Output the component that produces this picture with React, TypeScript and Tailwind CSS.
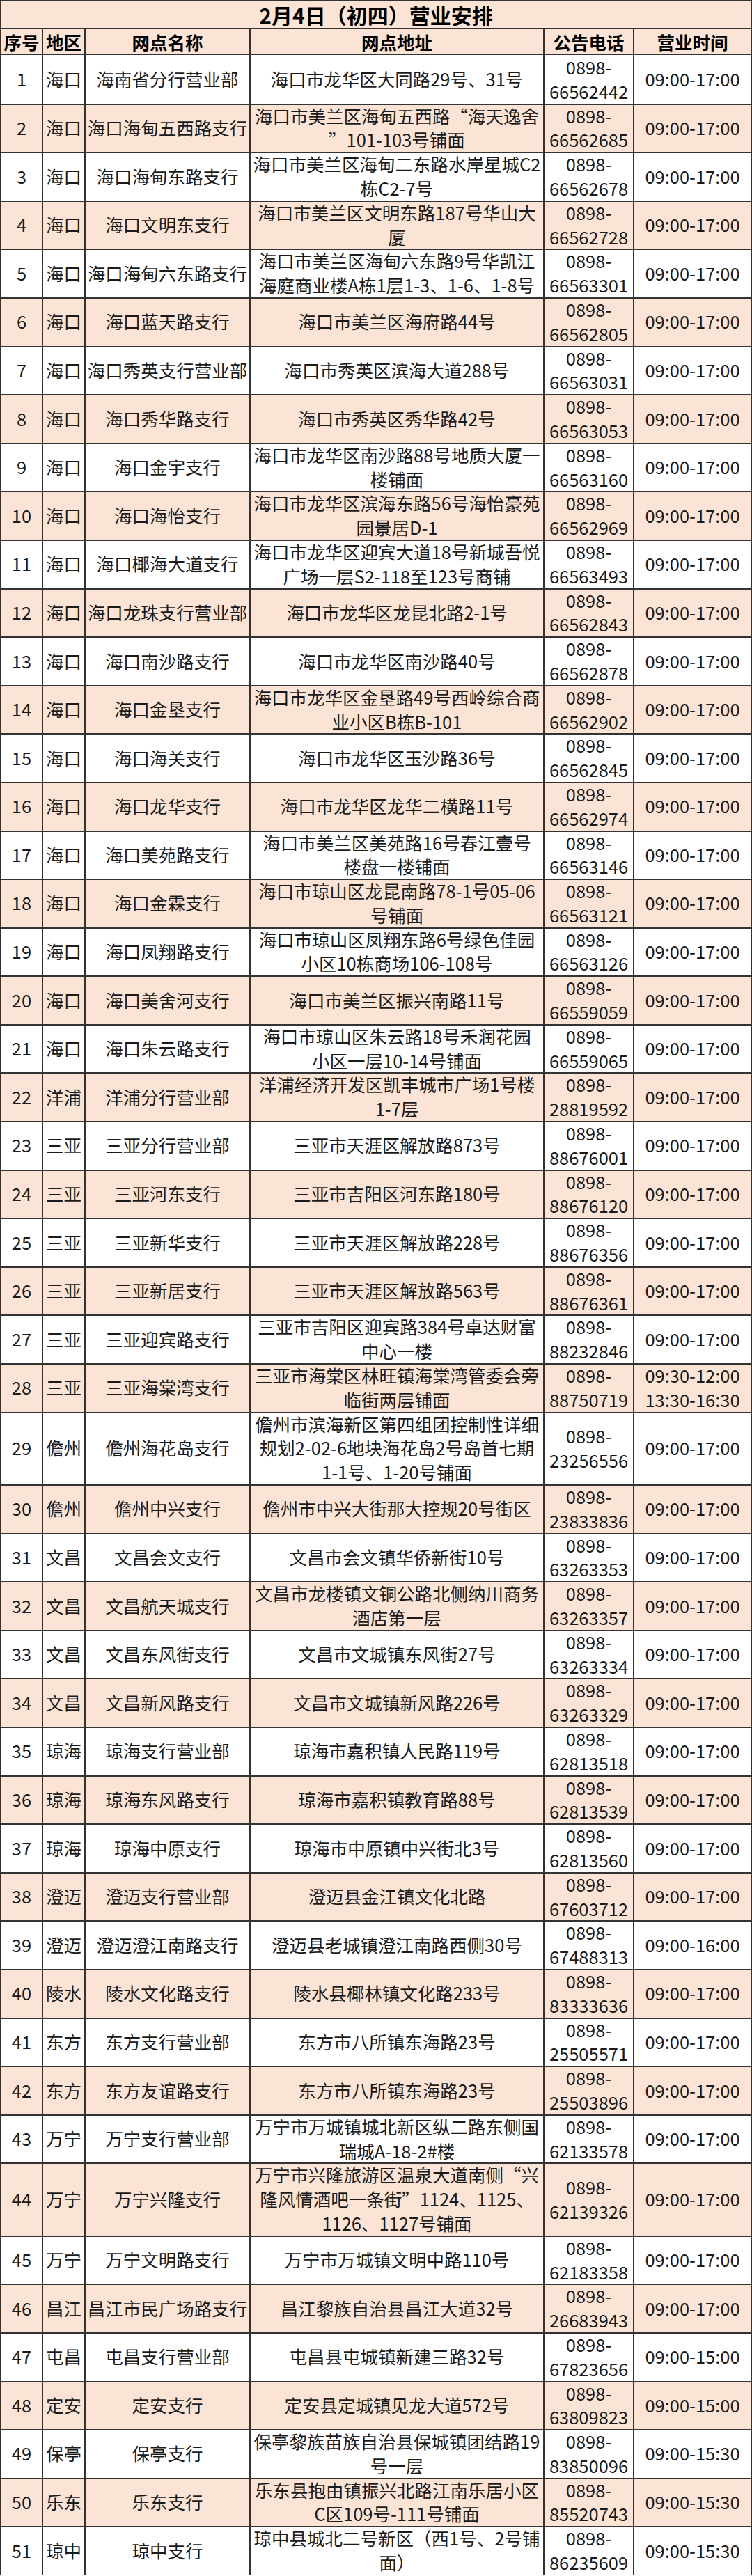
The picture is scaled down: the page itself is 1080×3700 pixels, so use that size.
type Branch = { no: number; area: string; name: string; addr: string; tel: string; hours?: string };

// addr lines are split on "|" so the wrapping matches the printed sheet
const rows: Branch[] = [
  { no: 1, area: "海口", name: "海南省分行营业部", addr: "海口市龙华区大同路29号、31号", tel: "66562442" },
  { no: 2, area: "海口", name: "海口海甸五西路支行", addr: "海口市美兰区海甸五西路“海天逸舍|”101-103号铺面", tel: "66562685" },
  { no: 3, area: "海口", name: "海口海甸东路支行", addr: "海口市美兰区海甸二东路水岸星城C2|栋C2-7号", tel: "66562678" },
  { no: 4, area: "海口", name: "海口文明东支行", addr: "海口市美兰区文明东路187号华山大|厦", tel: "66562728" },
  { no: 5, area: "海口", name: "海口海甸六东路支行", addr: "海口市美兰区海甸六东路9号华凯江|海庭商业楼A栋1层1-3、1-6、1-8号", tel: "66563301" },
  { no: 6, area: "海口", name: "海口蓝天路支行", addr: "海口市美兰区海府路44号", tel: "66562805" },
  { no: 7, area: "海口", name: "海口秀英支行营业部", addr: "海口市秀英区滨海大道288号", tel: "66563031" },
  { no: 8, area: "海口", name: "海口秀华路支行", addr: "海口市秀英区秀华路42号", tel: "66563053" },
  { no: 9, area: "海口", name: "海口金宇支行", addr: "海口市龙华区南沙路88号地质大厦一|楼铺面", tel: "66563160" },
  { no: 10, area: "海口", name: "海口海怡支行", addr: "海口市龙华区滨海东路56号海怡豪苑|园景居D-1", tel: "66562969" },
  { no: 11, area: "海口", name: "海口椰海大道支行", addr: "海口市龙华区迎宾大道18号新城吾悦|广场一层S2-118至123号商铺", tel: "66563493" },
  { no: 12, area: "海口", name: "海口龙珠支行营业部", addr: "海口市龙华区龙昆北路2-1号", tel: "66562843" },
  { no: 13, area: "海口", name: "海口南沙路支行", addr: "海口市龙华区南沙路40号", tel: "66562878" },
  { no: 14, area: "海口", name: "海口金垦支行", addr: "海口市龙华区金垦路49号西岭综合商|业小区B栋B-101", tel: "66562902" },
  { no: 15, area: "海口", name: "海口海关支行", addr: "海口市龙华区玉沙路36号", tel: "66562845" },
  { no: 16, area: "海口", name: "海口龙华支行", addr: "海口市龙华区龙华二横路11号", tel: "66562974" },
  { no: 17, area: "海口", name: "海口美苑路支行", addr: "海口市美兰区美苑路16号春江壹号|楼盘一楼铺面", tel: "66563146" },
  { no: 18, area: "海口", name: "海口金霖支行", addr: "海口市琼山区龙昆南路78-1号05-06|号铺面", tel: "66563121" },
  { no: 19, area: "海口", name: "海口凤翔路支行", addr: "海口市琼山区凤翔东路6号绿色佳园|小区10栋商场106-108号", tel: "66563126" },
  { no: 20, area: "海口", name: "海口美舍河支行", addr: "海口市美兰区振兴南路11号", tel: "66559059" },
  { no: 21, area: "海口", name: "海口朱云路支行", addr: "海口市琼山区朱云路18号禾润花园|小区一层10-14号铺面", tel: "66559065" },
  { no: 22, area: "洋浦", name: "洋浦分行营业部", addr: "洋浦经济开发区凯丰城市广场1号楼|1-7层", tel: "28819592" },
  { no: 23, area: "三亚", name: "三亚分行营业部", addr: "三亚市天涯区解放路873号", tel: "88676001" },
  { no: 24, area: "三亚", name: "三亚河东支行", addr: "三亚市吉阳区河东路180号", tel: "88676120" },
  { no: 25, area: "三亚", name: "三亚新华支行", addr: "三亚市天涯区解放路228号", tel: "88676356" },
  { no: 26, area: "三亚", name: "三亚新居支行", addr: "三亚市天涯区解放路563号", tel: "88676361" },
  { no: 27, area: "三亚", name: "三亚迎宾路支行", addr: "三亚市吉阳区迎宾路384号卓达财富|中心一楼", tel: "88232846" },
  { no: 28, area: "三亚", name: "三亚海棠湾支行", addr: "三亚市海棠区林旺镇海棠湾管委会旁|临街两层铺面", tel: "88750719", hours: "09:30-12:00|13:30-16:30" },
  { no: 29, area: "儋州", name: "儋州海花岛支行", addr: "儋州市滨海新区第四组团控制性详细|规划2-02-6地块海花岛2号岛首七期|1-1号、1-20号铺面", tel: "23256556" },
  { no: 30, area: "儋州", name: "儋州中兴支行", addr: "儋州市中兴大街那大控规20号街区", tel: "23833836" },
  { no: 31, area: "文昌", name: "文昌会文支行", addr: "文昌市会文镇华侨新街10号", tel: "63263353" },
  { no: 32, area: "文昌", name: "文昌航天城支行", addr: "文昌市龙楼镇文铜公路北侧纳川商务|酒店第一层", tel: "63263357" },
  { no: 33, area: "文昌", name: "文昌东风街支行", addr: "文昌市文城镇东风街27号", tel: "63263334" },
  { no: 34, area: "文昌", name: "文昌新风路支行", addr: "文昌市文城镇新风路226号", tel: "63263329" },
  { no: 35, area: "琼海", name: "琼海支行营业部", addr: "琼海市嘉积镇人民路119号", tel: "62813518" },
  { no: 36, area: "琼海", name: "琼海东风路支行", addr: "琼海市嘉积镇教育路88号", tel: "62813539" },
  { no: 37, area: "琼海", name: "琼海中原支行", addr: "琼海市中原镇中兴街北3号", tel: "62813560" },
  { no: 38, area: "澄迈", name: "澄迈支行营业部", addr: "澄迈县金江镇文化北路", tel: "67603712" },
  { no: 39, area: "澄迈", name: "澄迈澄江南路支行", addr: "澄迈县老城镇澄江南路西侧30号", tel: "67488313", hours: "09:00-16:00" },
  { no: 40, area: "陵水", name: "陵水文化路支行", addr: "陵水县椰林镇文化路233号", tel: "83333636" },
  { no: 41, area: "东方", name: "东方支行营业部", addr: "东方市八所镇东海路23号", tel: "25505571" },
  { no: 42, area: "东方", name: "东方友谊路支行", addr: "东方市八所镇东海路23号", tel: "25503896" },
  { no: 43, area: "万宁", name: "万宁支行营业部", addr: "万宁市万城镇城北新区纵二路东侧国|瑞城A-18-2#楼", tel: "62133578" },
  { no: 44, area: "万宁", name: "万宁兴隆支行", addr: "万宁市兴隆旅游区温泉大道南侧“兴|隆风情酒吧一条街”1124、1125、|1126、1127号铺面", tel: "62139326" },
  { no: 45, area: "万宁", name: "万宁文明路支行", addr: "万宁市万城镇文明中路110号", tel: "62183358" },
  { no: 46, area: "昌江", name: "昌江市民广场路支行", addr: "昌江黎族自治县昌江大道32号", tel: "26683943" },
  { no: 47, area: "屯昌", name: "屯昌支行营业部", addr: "屯昌县屯城镇新建三路32号", tel: "67823656", hours: "09:00-15:00" },
  { no: 48, area: "定安", name: "定安支行", addr: "定安县定城镇见龙大道572号", tel: "63809823", hours: "09:00-15:00" },
  { no: 49, area: "保亭", name: "保亭支行", addr: "保亭黎族苗族自治县保城镇团结路19|号一层", tel: "83850096", hours: "09:00-15:30" },
  { no: 50, area: "乐东", name: "乐东支行", addr: "乐东县抱由镇振兴北路江南乐居小区|C区109号-111号铺面", tel: "85520743", hours: "09:00-15:30" },
  { no: 51, area: "琼中", name: "琼中支行", addr: "琼中县城北二号新区（西1号、2号铺|面）", tel: "86235609", hours: "09:00-15:30" },
];

const grid = "grid grid-cols-[62px_61px_237px_422px_129px_169px]";

export default function App() {
  return (
    <main className="w-[1080px] bg-white font-['Noto_Sans_CJK_SC','Noto_Sans',sans-serif] text-[#1a1a1a]">
      <div className="flex h-[42px] items-center justify-center border-2 border-[#333] bg-[#fbe4d5] text-[30px] font-bold leading-none text-black">
        2月4日（初四）营业安排
      </div>
      <div className={`${grid} h-[37px] bg-[#fbe4d5] text-[25.5px] font-bold leading-none text-black`}>
        {["序号", "地区", "网点名称", "网点地址", "公告电话", "营业时间"].map((h, i) => (
          <Cell key={h} first={i === 0}>{h}</Cell>
        ))}
      </div>
      {rows.map((r) => {
        const lines = r.addr.split("|");
        const tall = lines.length > 2;
        return (
          <div key={r.no}
            className={`${grid} text-[25.5px] leading-[34.8px] ${tall ? "h-[104.4px]" : "h-[69.6px]"} ${r.no % 2 === 0 ? "bg-[#fbe4d5]" : "bg-white"}`}>
            <Cell first>{r.no}</Cell>
            <Cell>{r.area}</Cell>
            <Cell>{r.name}</Cell>
            <Cell>{lines.map((l) => <span key={l}>{l}</span>)}</Cell>
            <Cell><span>0898-</span><span>{r.tel}</span></Cell>
            <Cell>{(r.hours ?? "09:00-17:00").split("|").map((h) => <span key={h}>{h}</span>)}</Cell>
          </div>
        );
      })}
    </main>
  );
}

function Cell({ children, first }: { children: React.ReactNode; first?: boolean }) {
  return (
    <div className={`flex flex-col items-center justify-center whitespace-nowrap border-b-2 border-r-2 border-[#333] text-center ${first ? "border-l-2" : ""}`}>
      {children}
    </div>
  );
}
